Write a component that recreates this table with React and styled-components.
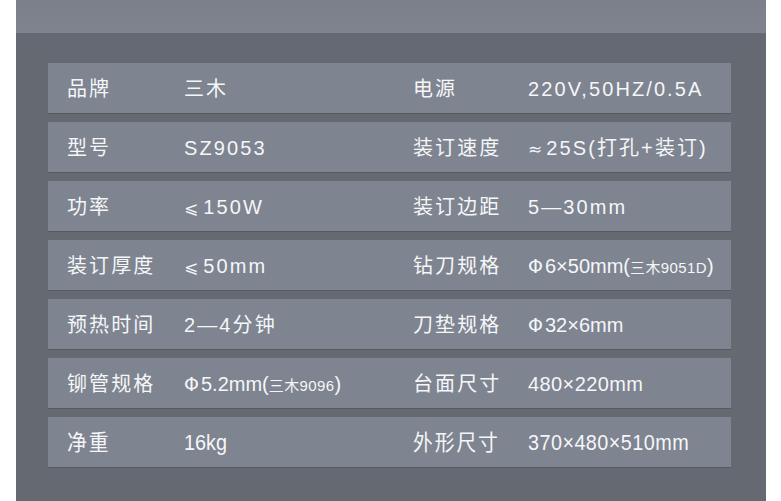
import React from "react";
import styled, { createGlobalStyle } from "styled-components";

const Global = createGlobalStyle`
  html, body { margin: 0; padding: 0; background: #ffffff; }
  body { font-family: "Liberation Sans", "Noto Sans CJK SC", sans-serif; }
`;

const Page = styled.div`
  width: 781px;
  height: 501px;
  padding: 0 15px 0 16px;
  box-sizing: border-box;
  overflow: hidden;
`;

const Panel = styled.div`
  height: 100%;
  background: #656971;
  display: flex;
  flex-direction: column;
`;

const TopBand = styled.div`
  height: 33px;
  flex: none;
  background: linear-gradient(180deg, #7b808b 0%, #7f848f 100%);
`;

const Table = styled.div`
  padding: 30px 35px 0 32px;
  display: flex;
  flex-direction: column;
  gap: 9px;
`;

const Row = styled.div`
  height: 50px;
  background: #7e8490;
  box-shadow: 0 1px 0 rgba(60, 63, 70, 0.35);
  display: grid;
  grid-template-columns: 117px 229px 115px 1fr;
  align-items: center;
  padding-left: 19px;
  color: #f5f6f8;
  font-size: 20px;
  letter-spacing: 2.1px;
  white-space: nowrap;
`;

const Cell = styled.div`
  line-height: 1;
  padding-top: 2px;
  transform-origin: left center;
  ${(p) =>
    p.$condensed &&
    `
    font-size: 22px;
    transform: scaleX(0.9);
  `}
`;

const Sym = styled.span`
  font-family: "DejaVu Sans", "Liberation Sans", sans-serif;
  font-size: ${(p) => p.$size || 18}px;
  letter-spacing: ${(p) => p.$ls ?? 4}px;
`;

const Small = styled.span`
  font-size: 15px;
  letter-spacing: 0.4px;
`;

const Paren = styled.span`
  letter-spacing: 0;
`;

const Plain = styled.span`
  letter-spacing: ${(p) => p.$ls ?? 0}px;
`;

const Phi = () => (
  <Sym $size={19} $ls={2}>
    Φ
  </Sym>
);

const rows = [
  ["品牌", "三木", "电源", "220V,50HZ/0.5A"],
  ["型号", "SZ9053", "装订速度", <><Sym $size={17} $ls={4}>≈</Sym>25S(打孔+装订)</>],
  ["功率", <><Sym $size={17} $ls={5}>⩽</Sym>150W</>, "装订边距", "5—30mm"],
  ["装订厚度", <><Sym $size={17} $ls={5}>⩽</Sym>50mm</>, "钻刀规格",
    <Plain><Phi />6×50mm<Paren>(</Paren><Small>三木9051D</Small><Paren>)</Paren></Plain>],
  ["预热时间", "2—4分钟", "刀垫规格", <Plain><Phi />32×6mm</Plain>],
  ["铆管规格", <Plain><Phi />5.2mm<Paren>(</Paren><Small>三木9096</Small><Paren>)</Paren></Plain>, "台面尺寸", <Plain $ls={0.4}>480×220mm</Plain>],
  ["净重", <Plain>16kg</Plain>, "外形尺寸", <Plain $ls={0.5}>370×480×510mm</Plain>],
];

export default function App() {
  return (
    <>
      <Global />
      <Page>
        <Panel>
          <TopBand />
          <Table>
            {rows.map((r, i) => {
              const last = i === rows.length - 1;
              return (
                <Row key={i}>
                  <Cell $condensed={last}>{r[0]}</Cell>
                  <Cell $condensed={last}>{r[1]}</Cell>
                  <Cell $condensed={last}>{r[2]}</Cell>
                  <Cell $condensed={last}>{r[3]}</Cell>
                </Row>
              );
            })}
          </Table>
        </Panel>
      </Page>
    </>
  );
}
